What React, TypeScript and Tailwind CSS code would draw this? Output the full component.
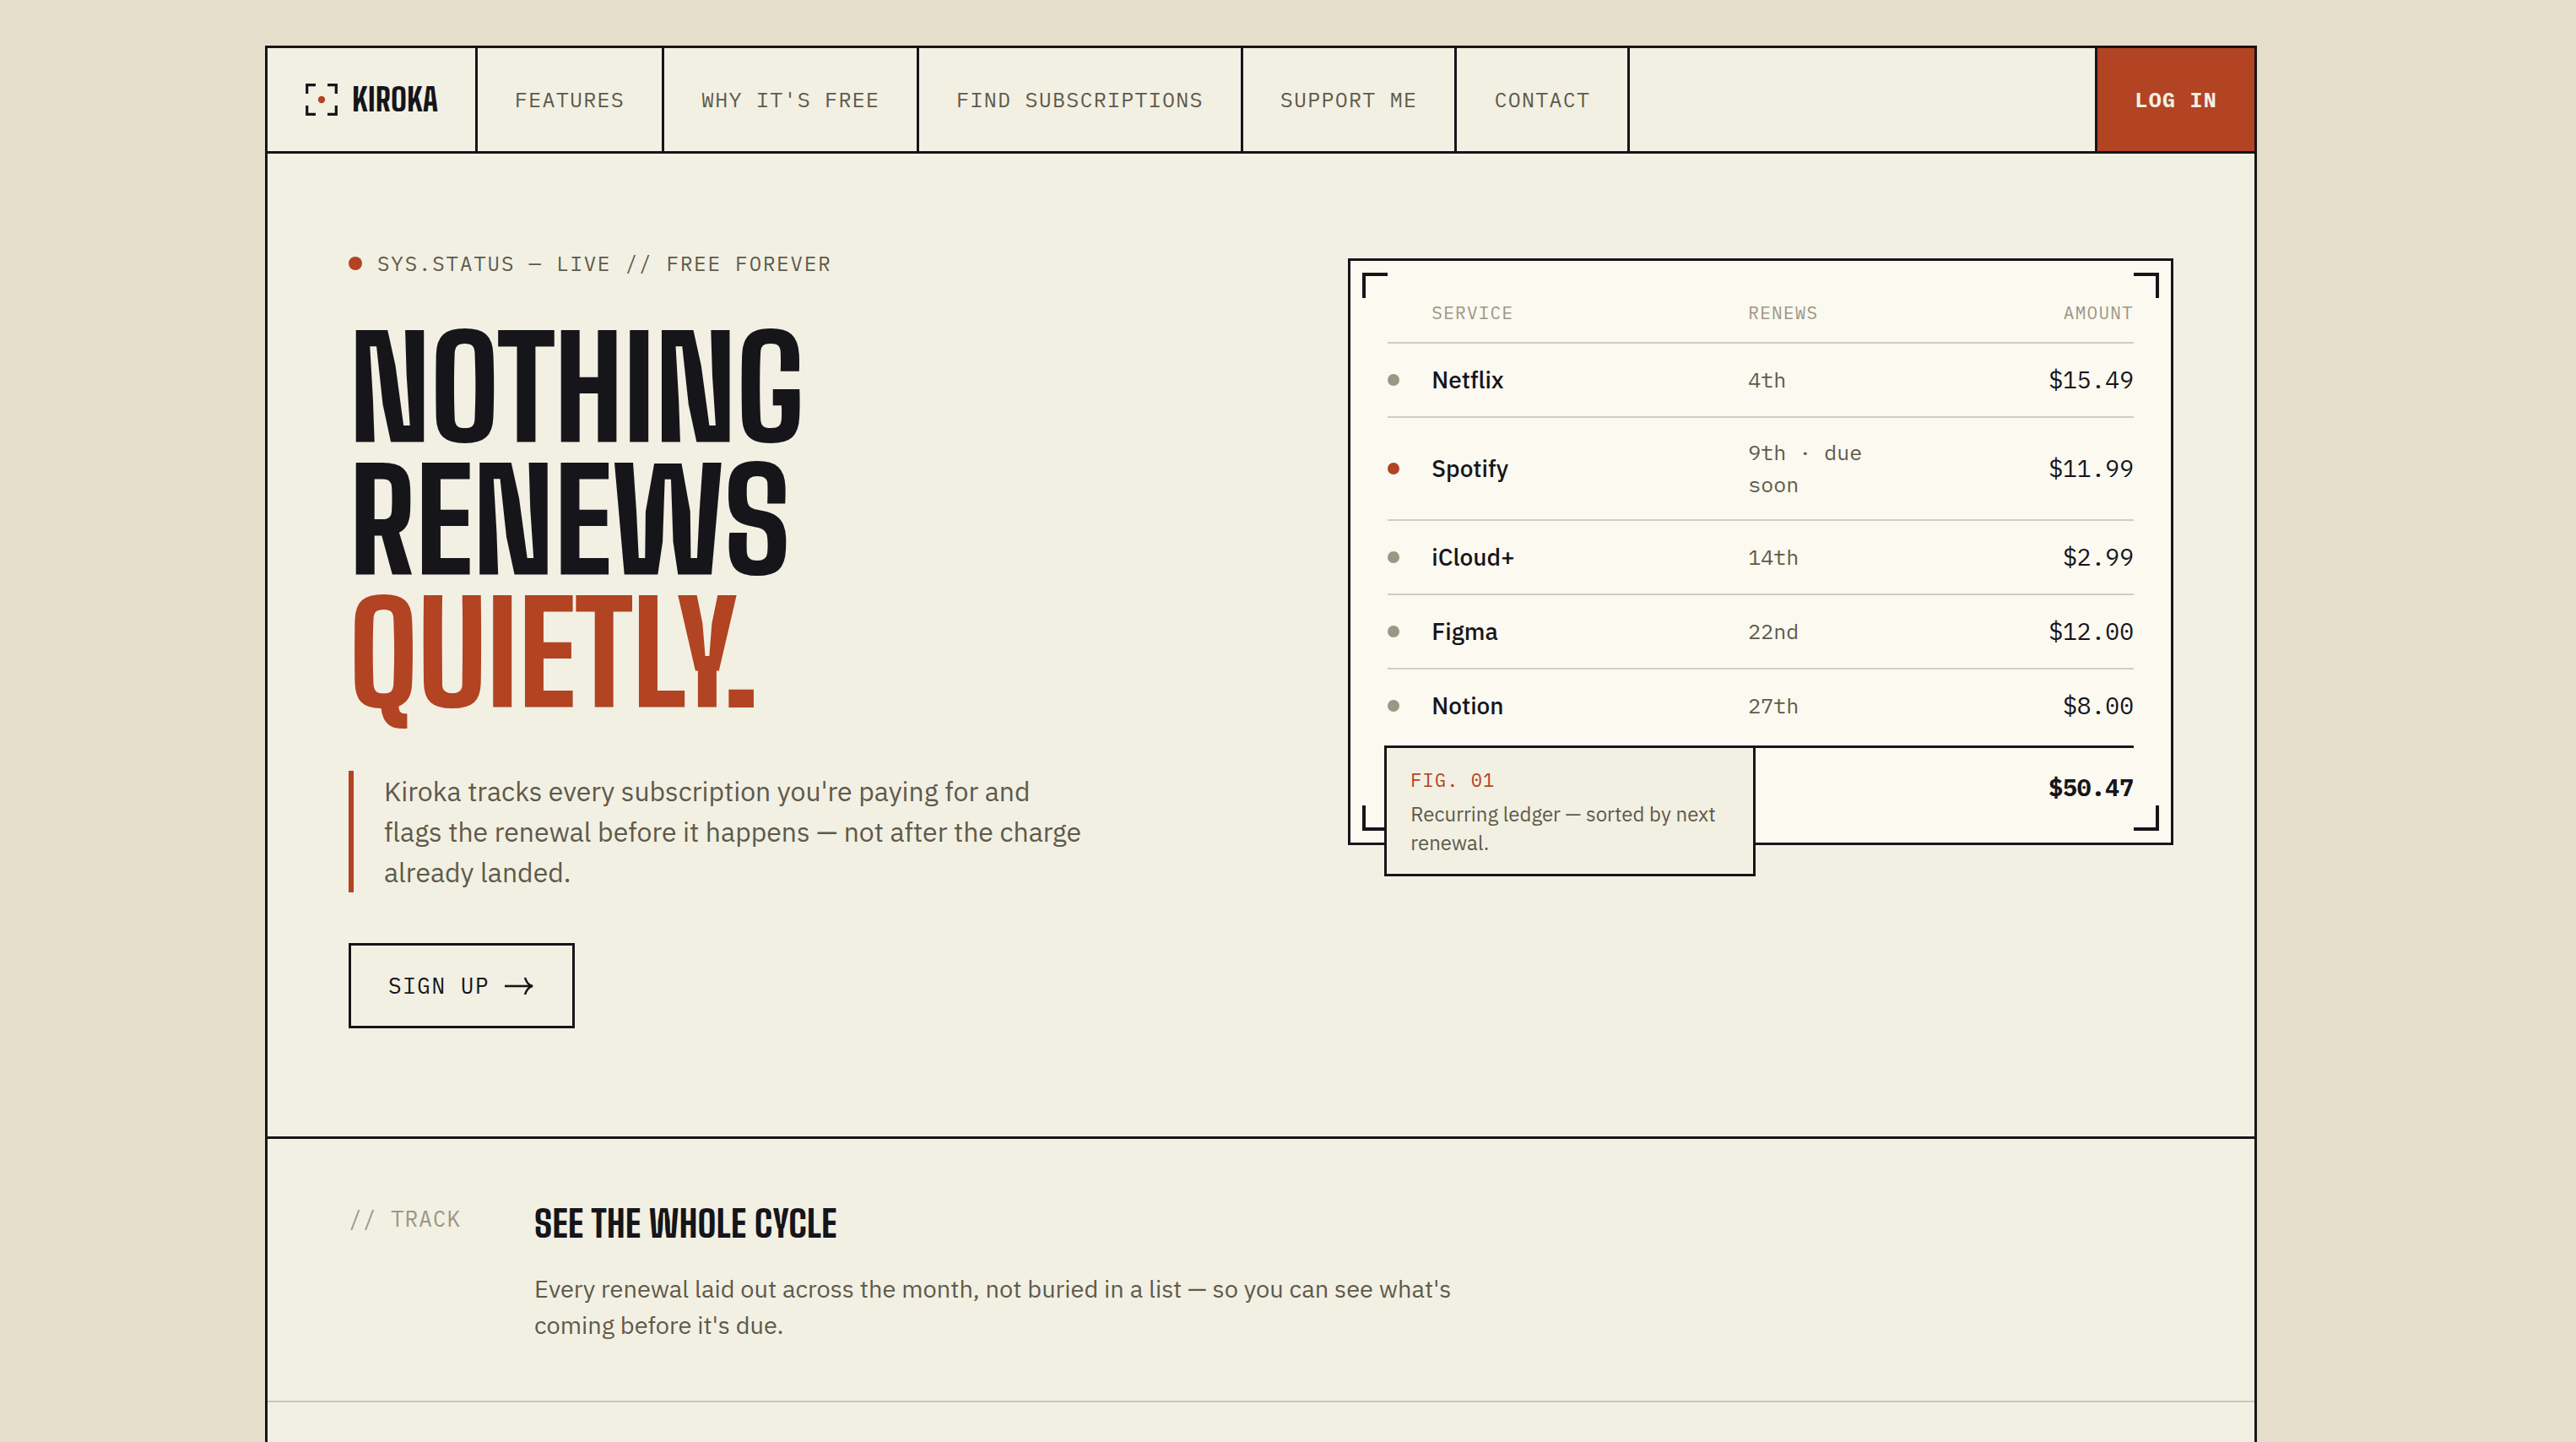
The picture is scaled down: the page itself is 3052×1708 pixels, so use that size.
const mono = "font-['IBM_Plex_Mono','Liberation_Mono',monospace]";
const display =
  "font-['Big_Shoulders_Text','Roboto_Condensed','Liberation_Sans',sans-serif] font-extrabold";

const links = [
  "Features",
  "Why it's free",
  "Find subscriptions",
  "Support me",
  "Contact",
];

const ledger = [
  { name: "Netflix", renews: "4th", amount: "$15.49", due: false },
  { name: "Spotify", renews: "9th · due soon", amount: "$11.99", due: true },
  { name: "iCloud+", renews: "14th", amount: "$2.99", due: false },
  { name: "Figma", renews: "22nd", amount: "$12.00", due: false },
  { name: "Notion", renews: "27th", amount: "$8.00", due: false },
];

const corners = [
  "left-3.5 top-3.5 border-l-4 border-t-4",
  "right-3.5 top-3.5 border-r-4 border-t-4",
  "bottom-3.5 left-3.5 border-b-4 border-l-4",
  "bottom-3.5 right-3.5 border-b-4 border-r-4",
];

const Logo = () => (
  <svg width="40" height="40" viewBox="0 0 40 40" fill="none" aria-hidden="true">
    <path
      d="M2.700 13V2.700H13M27 2.700h10.300V13M37.300 27v10.300H27M13 37.300H2.700V27"
      stroke="#16151a"
      strokeWidth="3.200"
    />
    <circle cx="20" cy="20" r="4.200" fill="#b24323" />
  </svg>
);

const Header = () => {
  return (
    <header className="flex h-[125px] border-b-3 border-[#16151a]">
      <a
        href="#"
        className="flex items-center gap-4 border-r-3 border-[#16151a] px-11"
      >
        <Logo />
        <span className={`${display} text-[38px] leading-none`}>KIROKA</span>
      </a>
      <nav className="flex flex-1">
        {links.map((link) => (
          <a
            key={link}
            href="#"
            className={`${mono} flex items-center border-r-3 border-[#16151a] px-11 text-[25px] uppercase tracking-wider text-[#5e5a4b]`}
          >
            {link}
          </a>
        ))}
      </nav>
      <a
        href="#"
        className={`${mono} flex items-center border-l-3 border-[#16151a] bg-[#b24323] px-11 text-[25px] font-bold uppercase tracking-wider text-[#f2f0e3]`}
      >
        Log in
      </a>
    </header>
  );
};

const Ledger = () => {
  return (
    <figure className="relative mt-3 border-3 border-[#16151a] bg-[#fbf9f0] p-11">
      {corners.map((corner) => (
        <span
          key={corner}
          className={`${corner} absolute size-[30px] border-[#16151a]`}
        />
      ))}
      <table className="w-full table-fixed border-separate border-spacing-0 text-left">
        <colgroup>
          <col className="w-[52px]" />
          <col className="w-[375px]" />
          <col className="w-[184px]" />
          <col />
        </colgroup>
        <thead>
          <tr
            className={`${mono} text-[21px] uppercase leading-[34px] tracking-[0.06em] text-[#9b9786] *:border-b-2 *:border-[#d0cdc5] *:pb-[18px] *:font-normal`}
          >
            <td />
            <th>Service</th>
            <th>Renews</th>
            <th className="text-right">Amount</th>
          </tr>
        </thead>
        <tbody>
          {ledger.map((row) => (
            <tr
              key={row.name}
              className="*:border-b-2 *:border-[#d0cdc5] *:py-[22px] last:*:border-b-4 last:*:border-transparent"
            >
              <td>
                <span
                  className={`block size-3.5 rounded-full ${row.due ? "bg-[#b24323]" : "bg-[#9b9786]"}`}
                />
              </td>
              <th className="text-[28px] font-medium leading-[42px]">
                {row.name}
              </th>
              <td className={`${mono} text-[25px] leading-[38px] text-[#5e5a4b]`}>
                {row.renews}
              </td>
              <td className={`${mono} text-right text-[28px] leading-[42px]`}>
                {row.amount}
              </td>
            </tr>
          ))}
        </tbody>
        <tfoot>
          <tr className="*:border-t-3 *:border-[#16151a] *:pt-[26px]">
            <td colSpan={3} />
            <td
              className={`${mono} text-right text-[28px] font-bold leading-[42px]`}
            >
              $50.47
            </td>
          </tr>
        </tfoot>
      </table>
      <figcaption className="absolute -bottom-10 left-10 w-[440px] border-3 border-[#16151a] bg-[#f2f0e3] px-7 py-5">
        <p
          className={`${mono} text-[22px] uppercase leading-[35px] tracking-wider text-[#b24323]`}
        >
          Fig. 01
        </p>
        <p className="mt-1.5 text-[24px] leading-[34px] text-[#5e5a4b]">
          Recurring ledger — sorted by next renewal.
        </p>
      </figcaption>
    </figure>
  );
};

const Hero = () => {
  return (
    <section className="grid grid-cols-[1.15fr_1fr] items-start gap-[60px] border-b-3 border-[#16151a] px-24 pb-32 pt-28">
      <div>
        <p
          className={`${mono} flex items-center gap-[18px] text-[24px] uppercase leading-9 tracking-[0.08em] text-[#5e5a4b]`}
        >
          <span className="size-4 rounded-full bg-[#b24323]" />
          Sys.status — Live // Free forever
        </p>
        <h1
          className={`${display} mt-[52px] text-[166px] uppercase leading-[157px] tracking-[-0.01em]`}
        >
          Nothing
          <br />
          renews
          <br />
          <span className="text-[#b24323]">quietly.</span>
        </h1>
        <p className="mt-[60px] max-w-[880px] border-l-6 border-[#b24323] pl-9 text-[32px] leading-[48px] text-[#5e5a4b]">
          Kiroka tracks every subscription you're paying for and flags the
          renewal before it happens — not after the charge already landed.
        </p>
        <a
          href="#"
          className={`${mono} mt-[60px] flex h-[101px] w-fit items-center gap-[18px] border-3 border-[#16151a] px-11 text-[26px] uppercase tracking-[0.06em]`}
        >
          Sign up
          <svg width="36" height="24" viewBox="0 0 36 24" fill="none" aria-hidden="true">
            <path d="M0 12h32" stroke="#16151a" strokeWidth="2.600" />
            <path d="M24 2c1.500 5 4.500 9 9 10c-4.500 1-7.500 5-9 10" stroke="#16151a" strokeWidth="2.600" />
          </svg>
        </a>
      </div>
      <Ledger />
    </section>
  );
};

const Track = () => {
  return (
    <section className="grid grid-cols-[180px_1fr] gap-10 border-b-2 border-[#c9c6ba] px-24 pb-[68px] pt-[72px]">
      <p
        className={`${mono} text-[26px] uppercase leading-[44px] tracking-[0.04em] text-[#9b9786]`}
      >
        // Track
      </p>
      <div>
        <h2 className={`${display} text-[44px] uppercase leading-[56px]`}>
          See the whole cycle
        </h2>
        <p className="mt-7 max-w-[1120px] text-[29px] leading-[43px] text-[#5e5a4b]">
          Every renewal laid out across the month, not buried in a list — so you
          can see what's coming before it's due.
        </p>
      </div>
    </section>
  );
};

const App = () => {
  return (
    <div className="min-h-screen bg-[#e5decb] pr-16 pt-[54px] font-['IBM_Plex_Sans','Liberation_Sans',sans-serif] text-[#16151a]">
      <main className="mx-auto min-h-[1654px] max-w-[2360px] border-x-3 border-t-3 border-[#16151a] bg-[#f2f0e3]">
        <Header />
        <Hero />
        <Track />
      </main>
    </div>
  );
};

export default App;
